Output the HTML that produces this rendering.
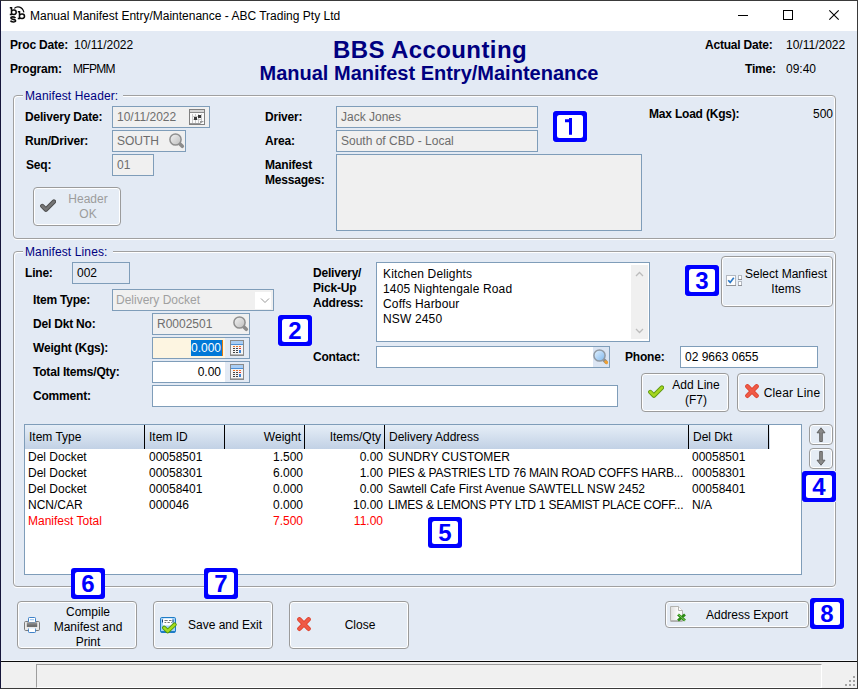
<!DOCTYPE html>
<html><head><meta charset="utf-8">
<style>
*{box-sizing:border-box;margin:0;padding:0}
html,body{width:858px;height:689px;overflow:hidden;background:#e3eaf4}
body{font-family:"Liberation Sans",sans-serif;font-size:12px;color:#000;position:relative}
.a{position:absolute;white-space:nowrap;line-height:14px}
.b{font-weight:bold;letter-spacing:-0.2px}
.in{position:absolute;border:1px solid #7f9db9;background:#fff;height:22px;line-height:20px;padding-left:4px;white-space:nowrap;overflow:hidden}
.dis{background:#f0f0f0;color:#6d6d6d}
.fs{position:absolute;border:1px solid #a0a0a0;border-radius:4px;box-shadow:0 1px 0 #fff, inset 1px 1px 0 #fff, inset -1px 0 0 #fff}
.lg{position:absolute;background:#e3eaf4;color:#000080;padding:0 5px 0 2px;letter-spacing:0.12px;line-height:14px;white-space:nowrap}
.btn{position:absolute;border:1px solid #9b9b9b;border-radius:4px;background:#e5ecf5;box-shadow:inset 0 0 0 1px #fff;text-align:center;line-height:15px}
.badge{position:absolute;width:34px;height:31px;background:#fff;color:#0000ff;font-weight:bold;font-size:24px;line-height:31px;text-align:center}
.badge:before{content:"";box-sizing:border-box;position:absolute;left:0;top:0;width:34px;height:31px;background:#0000ff;border-radius:3px}
.badge:after{content:"";box-sizing:border-box;position:absolute;left:4px;top:4px;width:26px;height:23px;background:#fff;border-radius:2.500px}
.badge i{position:absolute;left:0;top:0;width:34px;height:31px;z-index:2;font-style:normal;display:block}
.th{position:absolute;top:0;height:24px;line-height:24px;border-right:1px solid #000;padding:0 3px 0 4px;white-space:nowrap}
.r{text-align:right}
.row{position:absolute;left:0;height:16px;line-height:16px;width:778px}
.row span{position:absolute;white-space:nowrap}
</style></head><body>

<svg width="0" height="0" style="position:absolute"><defs>
<linearGradient id="gl" x1="0" y1="0" x2="1" y2="1"><stop offset="0" stop-color="#f4f4f4"/><stop offset="1" stop-color="#bdbdbd"/></linearGradient>
<linearGradient id="bl" x1="0" y1="0" x2="1" y2="1"><stop offset="0" stop-color="#e6f3ff"/><stop offset="1" stop-color="#7db7ee"/></linearGradient>
<g id="magG"><path d="M11 11L13.300 13.300" stroke="#8c8c8c" stroke-width="3.600" stroke-linecap="round"/><circle cx="6.500" cy="6.500" r="5.600" fill="url(#gl)" stroke="#8f8f8f" stroke-width="1.500"/></g>
<g id="magB"><path d="M11 11L13 13" stroke="#8c8c8c" stroke-width="3.600" stroke-linecap="round"/><path d="M12.800 12.800L13.600 13.600" stroke="#f0a030" stroke-width="3" stroke-linecap="round"/><circle cx="6.500" cy="6.500" r="5.600" fill="url(#bl)" stroke="#909aa5" stroke-width="1.500"/></g>
<g id="calc"><rect x="0.500" y="0.500" width="13" height="15" fill="#f4f4f4" stroke="#8a8a8a"/><rect x="1" y="1" width="12" height="3" fill="#a9cdf3"/><rect x="1" y="4" width="12" height="1" fill="#4d8fd6"/><g fill="#e8732c"><rect x="3" y="6" width="2" height="1"/><rect x="6" y="6" width="2" height="1"/><rect x="9" y="6" width="2" height="1"/></g><g fill="#444"><rect x="3" y="8" width="2" height="1"/><rect x="6" y="8" width="2" height="1"/><rect x="3" y="10" width="2" height="1"/><rect x="6" y="10" width="2" height="1"/><rect x="3" y="12" width="2" height="1"/><rect x="6" y="12" width="2" height="1"/></g><rect x="9" y="8" width="2" height="1" fill="#d33"/><rect x="9" y="10" width="2" height="3" fill="#3b82d6"/><rect x="1" y="14" width="12" height="1" fill="#b5b5b5"/></g>
<g id="cal"><rect x="0.500" y="0.500" width="15" height="15" fill="#fbfbfb" stroke="#808080"/><rect x="1" y="1" width="14" height="2" fill="#d6d6d6"/><rect x="1" y="3" width="14" height="1" fill="#8a8a8a"/><g fill="#c9c9c9"><rect x="3" y="5" width="1" height="9"/><rect x="6" y="5" width="1" height="9"/><rect x="9" y="5" width="1" height="9"/><rect x="12" y="5" width="1" height="7"/><rect x="3" y="7" width="10" height="1"/><rect x="3" y="10" width="10" height="1"/></g><rect x="9" y="6" width="3" height="3" fill="#3a3a3a"/><rect x="5" y="8" width="3" height="3" fill="#3a3a3a"/><path d="M11 15V12h4z" fill="#9a9a9a"/><rect x="1" y="14" width="10" height="1" fill="#9a9a9a"/></g>
<path id="chkp" d="M2.300 7L5.900 10.600L13.900 2.600" fill="none" stroke-linecap="round" stroke-linejoin="round"/>
<g id="xx"><path d="M2.400 2.400L11.600 11.800M11.600 2.400L2.400 11.800" stroke="#dc3a26" stroke-width="4.400" stroke-linecap="round" fill="none"/><path d="M2.400 2.400L11.600 11.800M11.600 2.400L2.400 11.800" stroke="#ef5a46" stroke-width="3" stroke-linecap="round" fill="none"/></g>
</defs></svg>
<!-- title bar -->
<div class="a" style="left:0;top:0;width:858px;height:31px;background:#fff"></div>
<div class="a" style="left:30px;top:8px;font-size:12px;line-height:16px" id="ttl">Manual Manifest Entry/Maintenance - ABC Trading Pty Ltd</div>
<svg class="a" style="left:0px;top:0px" width="30" height="30" viewBox="0 0 30 30"><g fill="none" stroke="#0a0a0a" stroke-width="1.500"><path d="M9.800 7.800H11.500V14.400M9.800 14.400H12.300M11.500 11.400C12.300 9.500 16.200 9.500 16.200 12.200C16.200 15 12.300 15 11.500 13.200"/><path d="M15.400 18.100C14.600 16.500 10.900 16.500 10.900 18.100C10.900 19.700 15.600 19 15.600 20.700C15.600 22.400 11.200 22.300 10.500 20.600" stroke-width="1.600"/><path d="M17.800 11.800H19.500V18.600M17.800 18.600H20.300M19.500 15.400C20.300 13.400 24.500 13.400 24.500 16.200C24.500 19.100 20.300 19.100 19.500 17.300"/><path d="M14.300 8.400C17 5.800 22.600 6.300 23.900 12.400" stroke-width="1.200"/></g></svg>
<svg class="a" style="left:730px;top:0" width="128" height="31" viewBox="0 0 128 31"><g stroke="#000" stroke-width="1" fill="none" shape-rendering="crispEdges"><path d="M8 15.500h10"/><rect x="53.500" y="10.500" width="9" height="9"/></g><path d="M99.300 10.300l9.400 9.400M108.700 10.300l-9.400 9.400" stroke="#000" stroke-width="1.100" fill="none"/></svg>

<!-- top info -->
<div class="a b" style="left:10px;top:38px">Proc Date:</div>
<div class="a" style="left:74px;top:38px">10/11/2022</div>
<div class="a b" style="left:10px;top:62px">Program:</div>
<div class="a" style="left:73px;top:62px;letter-spacing:-0.7px">MFPMM</div>
<div class="a b" id="h1" style="letter-spacing:0.4px;left:1px;width:858px;text-align:center;top:36px;font-size:24px;line-height:28px;color:#000080">BBS Accounting</div>
<div class="a b" id="h2" style="letter-spacing:0;left:0;width:858px;text-align:center;top:61px;font-size:20px;line-height:24px;color:#000080">Manual Manifest Entry/Maintenance</div>
<div class="a b" style="left:705px;top:38px">Actual Date:</div>
<div class="a" style="left:786px;top:38px">10/11/2022</div>
<div class="a b" style="left:745px;top:62px">Time:</div>
<div class="a" style="left:786px;top:62px">09:40</div>

<!-- Manifest Header -->
<div class="fs" style="left:13px;top:95px;width:823px;height:144px"></div>
<div class="lg" style="left:23px;top:89px">Manifest Header:</div>
<div class="a b" style="left:25px;top:110px">Delivery Date:</div>
<div class="in dis" style="left:112px;top:106px;width:98px">10/11/2022</div><svg class="a" style="left:189px;top:109px" width="16" height="16" viewBox="0 0 16 16"><use href="#cal"/></svg>
<div class="a b" style="left:25px;top:134px">Run/Driver:</div>
<div class="in dis" style="left:112px;top:130px;width:74px">SOUTH</div><svg class="a" style="left:169px;top:133px" width="16" height="16" viewBox="0 0 16 16"><use href="#magG"/></svg>
<div class="a b" style="left:26px;top:158px">Seq:</div>
<div class="in dis" style="left:112px;top:154px;width:42px">01</div>
<div class="btn" style="left:33px;top:187px;width:88px;height:39px;color:#9c9c9c;padding:4px 0 0 22px">Header<br>OK</div><svg class="a" style="left:40px;top:199px" width="16" height="14" viewBox="0 0 16 14"><use href="#chkp" stroke="#4d4d4d" stroke-width="4.400"/><use href="#chkp" stroke="#757575" stroke-width="2.600"/></svg>
<div class="a b" style="left:265px;top:110px">Driver:</div>
<div class="in dis" style="left:336px;top:106px;width:202px">Jack Jones</div>
<div class="a b" style="left:265px;top:134px">Area:</div>
<div class="in dis" style="left:336px;top:130px;width:202px">South of CBD - Local</div>
<div class="a b" style="left:265px;top:158px;line-height:15px">Manifest<br>Messages:</div>
<div class="in dis" style="left:336px;top:154px;width:306px;height:77px"></div>
<div class="a b" style="left:649px;top:107px">Max Load (Kgs):</div>
<div class="a r" style="left:780px;width:53px;top:107px">500</div>
<div class="badge" style="left:553px;top:111px"><i><svg style="position:absolute;left:0;top:0" width="34" height="31" viewBox="0 0 34 31"><path d="M12 9.700H17.500M17.500 7V23.800" stroke="#0000ff" stroke-width="3" fill="none"/></svg></i></div>

<!-- Manifest Lines -->
<div class="fs" style="left:13px;top:251px;width:823px;height:336px"></div>
<div class="lg" style="left:23px;top:245px">Manifest Lines:</div>
<div class="a b" style="left:25px;top:266px">Line:</div>
<div class="in" style="left:72px;top:262px;width:58px;background:#e3eaf4">002</div>
<div class="a b" style="left:33px;top:293px">Item Type:</div>
<div class="in dis" style="left:112px;top:289px;width:162px;color:#a0a0a0;padding-left:3px">Delivery Docket</div><div class="a" style="left:255px;top:292px;width:16px;height:17px;background:#fff"></div><svg class="a" style="left:260px;top:297px" width="10" height="8" viewBox="0 0 10 8"><path d="M1 1.500L5 5.500L9 1.500" fill="none" stroke="#8c8c8c" stroke-width="0.900"/></svg>
<div class="a b" style="left:33px;top:317px">Del Dkt No:</div>
<div class="in dis" style="left:152px;top:313px;width:98px">R0002501</div><svg class="a" style="left:233px;top:316px" width="16" height="16" viewBox="0 0 16 16"><use href="#magG"/></svg>
<div class="a b" style="left:33px;top:341px">Weight (Kgs):</div>
<div class="in" style="left:152px;top:337px;width:98px;background:#e3eaf4"></div><div class="a" style="left:153px;top:338px;width:72px;height:20px;background:#fdf5e1"></div><div class="a" style="left:191px;top:340px;width:31px;height:16px;background:#0078d7;color:#fff;line-height:16px;text-align:right;padding-right:1px">0.000</div><div class="a" style="left:222px;top:340px;width:1px;height:16px;background:#e07a10"></div><svg class="a" style="left:230px;top:340px" width="14" height="16" viewBox="0 0 14 16"><use href="#calc"/></svg>
<div class="a b" style="left:33px;top:365px">Total Items/Qty:</div>
<div class="in" style="left:152px;top:361px;width:98px;background:#e3eaf4"></div><div class="a r" style="left:153px;top:362px;width:72px;height:20px;background:#fff;line-height:20px;padding-right:4px">0.00</div><svg class="a" style="left:230px;top:364px" width="14" height="16" viewBox="0 0 14 16"><use href="#calc"/></svg>
<div class="a b" style="left:33px;top:389px">Comment:</div>
<div class="in" style="left:152px;top:385px;width:466px"></div>
<div class="badge" style="left:278px;top:315px"><i>2</i></div>

<div class="a b" style="left:313px;top:266px;line-height:15px">Delivery/<br>Pick-Up<br>Address:</div>
<div class="in" style="left:376px;top:262px;width:274px;height:80px;padding:4px 0 0 6px;line-height:15px;letter-spacing:0.15px">Kitchen Delights<br>1405 Nightengale Road<br>Coffs Harbour<br>NSW 2450</div>
<div class="a" style="left:631px;top:265px;width:17px;height:74px;background:#f0f0f0"></div><svg class="a" style="left:635px;top:271px" width="9" height="6" viewBox="0 0 9 6"><path d="M1 5L4.500 1.500L8 5" fill="none" stroke="#bcbcbc" stroke-width="1.300"/></svg><svg class="a" style="left:635px;top:328px" width="9" height="6" viewBox="0 0 9 6"><path d="M1 1L4.500 4.500L8 1" fill="none" stroke="#bcbcbc" stroke-width="1.300"/></svg><div class="a b" style="left:313px;top:350px">Contact:</div>
<div class="in" style="left:376px;top:346px;width:234px"></div><div class="a" style="left:593px;top:347px;width:16px;height:20px;background:#dbe5f3"></div><svg class="a" style="left:593px;top:349px" width="16" height="16" viewBox="0 0 16 16"><use href="#magB"/></svg>
<div class="a b" style="left:625px;top:350px">Phone:</div>
<div class="in" style="left:680px;top:346px;width:138px">02 9663 0655</div>
<div class="badge" style="left:685px;top:265px"><i>3</i></div>
<div class="btn" style="left:721px;top:256px;width:112px;height:51px;padding:10px 0 0 18px">Select Manfiest<br>Items</div><svg class="a" style="left:726px;top:275px" width="17" height="11" viewBox="0 0 17 11"><rect x="0.500" y="0.500" width="9" height="10" fill="#fdfdfd" stroke="#b3b8c0"/><path d="M0 10.500H10" stroke="#8f9196"/><path d="M2.200 5.200L4.200 7.400L7.800 2.800" fill="none" stroke="#2a78c8" stroke-width="1.700"/><rect x="12.500" y="0.500" width="3" height="4" fill="#fff" stroke="#b3b8c0"/><path d="M12 4.500H16" stroke="#8f9196"/><rect x="12.500" y="6.500" width="3" height="4" fill="#fff" stroke="#b3b8c0"/><path d="M12 10.500H16" stroke="#8f9196"/></svg>
<div class="btn" style="left:641px;top:373px;width:88px;height:39px;padding:4px 0 0 22px">Add Line<br>(F7)</div><svg class="a" style="left:648px;top:385px" width="16" height="14" viewBox="0 0 16 14"><use href="#chkp" stroke="#5f9a12" stroke-width="4.400"/><use href="#chkp" stroke="#a6d61f" stroke-width="2.600"/></svg>
<div class="btn" style="left:737px;top:373px;width:88px;height:39px;padding:12px 0 0 22px;letter-spacing:0.2px">Clear Line</div><svg class="a" style="left:745px;top:384px" width="14" height="15" viewBox="0 0 14 15"><use href="#xx"/></svg>

<!-- grid -->
<div id="grid" style="position:absolute;left:24px;top:424px;width:778px;height:151px;border:1px solid #7f9db9;background:#fff;overflow:hidden">
 <div style="position:absolute;left:0;top:0;width:745px;height:24px;background:linear-gradient(#e6eef7,#c2d1e5)"></div>
 <div class="th" style="left:0;width:120px">Item Type</div>
 <div class="th" style="left:120px;width:80px">Item ID</div>
 <div class="th r" style="left:200px;width:80px">Weight</div>
 <div class="th r" style="left:280px;width:80px">Items/Qty</div>
 <div class="th" style="left:360px;width:304px">Delivery Address</div>
 <div class="th" style="left:664px;width:80px">Del Dkt</div>
 <div class="row" style="top:24px"><span style="left:3px">Del Docket</span><span style="left:124px">00058501</span><span style="right:500px">1.500</span><span style="right:420px">0.00</span><span style="left:363px">SUNDRY CUSTOMER</span><span style="left:667px">00058501</span></div>
 <div class="row" style="top:40px"><span style="left:3px">Del Docket</span><span style="left:124px">00058301</span><span style="right:500px">6.000</span><span style="right:420px">1.00</span><span style="left:363px;letter-spacing:-0.2px">PIES &amp; PASTRIES LTD 76 MAIN ROAD COFFS HARB...</span><span style="left:667px">00058301</span></div>
 <div class="row" style="top:56px"><span style="left:3px">Del Docket</span><span style="left:124px">00058401</span><span style="right:500px">0.000</span><span style="right:420px">0.00</span><span style="left:363px">Sawtell Cafe First Avenue SAWTELL NSW 2452</span><span style="left:667px">00058401</span></div>
 <div class="row" style="top:72px"><span style="left:3px">NCN/CAR</span><span style="left:124px">000046</span><span style="right:500px">0.000</span><span style="right:420px">10.00</span><span style="left:363px;letter-spacing:-0.235px">LIMES &amp; LEMONS PTY LTD 1 SEAMIST PLACE COFF...</span><span style="left:667px">N/A</span></div>
 <div class="row" style="top:88px;color:#ff0000"><span style="left:3px">Manifest Total</span><span style="right:500px">7.500</span><span style="right:420px">11.00</span></div>
</div>
<div class="badge" style="left:428px;top:517px"><i>5</i></div>
<div class="btn" style="left:809px;top:424px;width:24px;height:21px"></div><svg class="a" style="left:816px;top:427px" width="10" height="15" viewBox="0 0 10 15"><path d="M5 0.800L9 5.800H6.300V14.500H3.700V5.800H1Z" fill="#8a8a8a" stroke="#5a5a5a" stroke-width="0.900"/></svg>
<div class="btn" style="left:809px;top:448px;width:24px;height:21px"></div><svg class="a" style="left:816px;top:451px" width="10" height="15" viewBox="0 0 10 15"><path d="M5 14.200L9 9.200H6.300V0.500H3.700V9.200H1Z" fill="#8a8a8a" stroke="#5a5a5a" stroke-width="0.900"/></svg>
<div class="badge" style="left:802px;top:471px"><i>4</i></div>

<!-- bottom buttons -->
<div class="badge" style="left:71px;top:568px"><i>6</i></div>
<div class="badge" style="left:204px;top:568px"><i>7</i></div>
<div class="btn" style="left:17px;top:601px;width:120px;height:48px;padding:3px 0 0 22px">Compile<br>Manifest and<br>Print</div><svg class="a" style="left:24px;top:617px" width="16" height="16" viewBox="0 0 16 16"><defs><linearGradient id="pg" x1="0" y1="0" x2="0" y2="1"><stop offset="0" stop-color="#9a9a9a"/><stop offset="1" stop-color="#5c5c5c"/></linearGradient></defs><rect x="0.500" y="4.500" width="15" height="9" rx="1.200" fill="#eaeaea" stroke="#7c7c7c"/><rect x="4.500" y="0.500" width="7" height="5" rx="0.800" fill="#fff" stroke="#3f82c8"/><rect x="6" y="2" width="4" height="1.300" fill="#a9cdf3"/><rect x="2.800" y="5.300" width="10.400" height="4.600" fill="url(#pg)"/><rect x="4.500" y="11.500" width="7" height="4" rx="0.800" fill="#fff" stroke="#3f82c8"/><rect x="5" y="11" width="6" height="1" fill="#eaf4ff"/></svg>
<div class="btn" style="left:153px;top:601px;width:120px;height:48px;padding:16px 0 0 24px">Save and Exit</div><svg class="a" style="left:160px;top:617px" width="17" height="17" viewBox="0 0 17 17"><rect x="0.500" y="0.500" width="15" height="15" rx="1.200" fill="#a4d2f8" stroke="#1e7cc6"/><rect x="1" y="14" width="14" height="1.500" fill="#1e7cc6"/><rect x="3" y="1.500" width="9.500" height="7" rx="1.200" fill="#fff"/><path d="M2.500 2.500v3M13 2.500v3" stroke="#123f78" stroke-width="1"/><path d="M4.500 3.500h3.200M9 3.500h2.500M4.500 5.500h1.800M7.500 5.500h2.300M11 5.500h0.800" stroke="#777" stroke-width="1"/><path d="M4.200 10.800L7.700 14.200L14.600 7.600" fill="none" stroke="#4f930c" stroke-width="4.200" stroke-linecap="round" stroke-linejoin="round"/><path d="M4.200 10.800L7.700 14.200L14.600 7.600" fill="none" stroke="#a6dc1c" stroke-width="2.500" stroke-linecap="round" stroke-linejoin="round"/></svg>
<div class="btn" style="left:289px;top:601px;width:120px;height:48px;padding:16px 0 0 22px">Close</div><svg class="a" style="left:297px;top:617px" width="14" height="15" viewBox="0 0 14 15"><use href="#xx"/></svg>
<div class="btn" style="left:665px;top:601px;width:144px;height:27px;padding:6px 0 0 20px">Address Export</div><svg class="a" style="left:670px;top:606px" width="17" height="16" viewBox="0 0 17 16"><defs><linearGradient id="pgx" x1="0" y1="0" x2="1" y2="0"><stop offset="0" stop-color="#dedede"/><stop offset="0.600" stop-color="#fbfbfb"/></linearGradient></defs><path d="M0.500 0.500H8.500L12.500 4.500V14.800H0.500Z" fill="url(#pgx)" stroke="#b4b4b0"/><path d="M0.500 15.200H12.500" stroke="#9c9c98" stroke-width="1"/><path d="M8.500 0.500V4.500H12.500" fill="#fff" stroke="#b4b4b0"/><path d="M8 8.500L15 14.500M15 8.500L8 14.500" stroke="#2c8a16" stroke-width="2.800" fill="none"/><path d="M8.300 8.300L15.200 14.700" stroke="#8fd76a" stroke-width="0.900" fill="none"/></svg>
<div class="badge" style="left:810px;top:598px"><i>8</i></div>

<!-- status bar -->
<div class="a" style="left:0;top:660px;width:858px;height:1px;background:#f3f6fa"></div>
<div class="a" style="left:0;top:661px;width:858px;height:28px;background:#f0f0f0;border-top:1px solid #0a0a0a"></div>
<div class="a" style="left:36px;top:664px;width:786px;height:24px;border:1px solid #9d9d9d;border-right-color:#fff;border-bottom-color:#fff;background:#f0f0f0"></div>
<svg class="a" style="left:844px;top:675px" width="12" height="12" viewBox="0 0 12 12" shape-rendering="crispEdges"><g fill="#a3a3a3"><rect x="9" y="1" width="2" height="2"/><rect x="5" y="5" width="2" height="2"/><rect x="9" y="5" width="2" height="2"/><rect x="1" y="9" width="2" height="2"/><rect x="5" y="9" width="2" height="2"/><rect x="9" y="9" width="2" height="2"/></g></svg>
<!-- window border -->
<div class="a" style="left:0;top:0;width:858px;height:689px;border:1px solid #3a3a3a;border-left-color:#15153a;pointer-events:none"></div>
</body></html>
